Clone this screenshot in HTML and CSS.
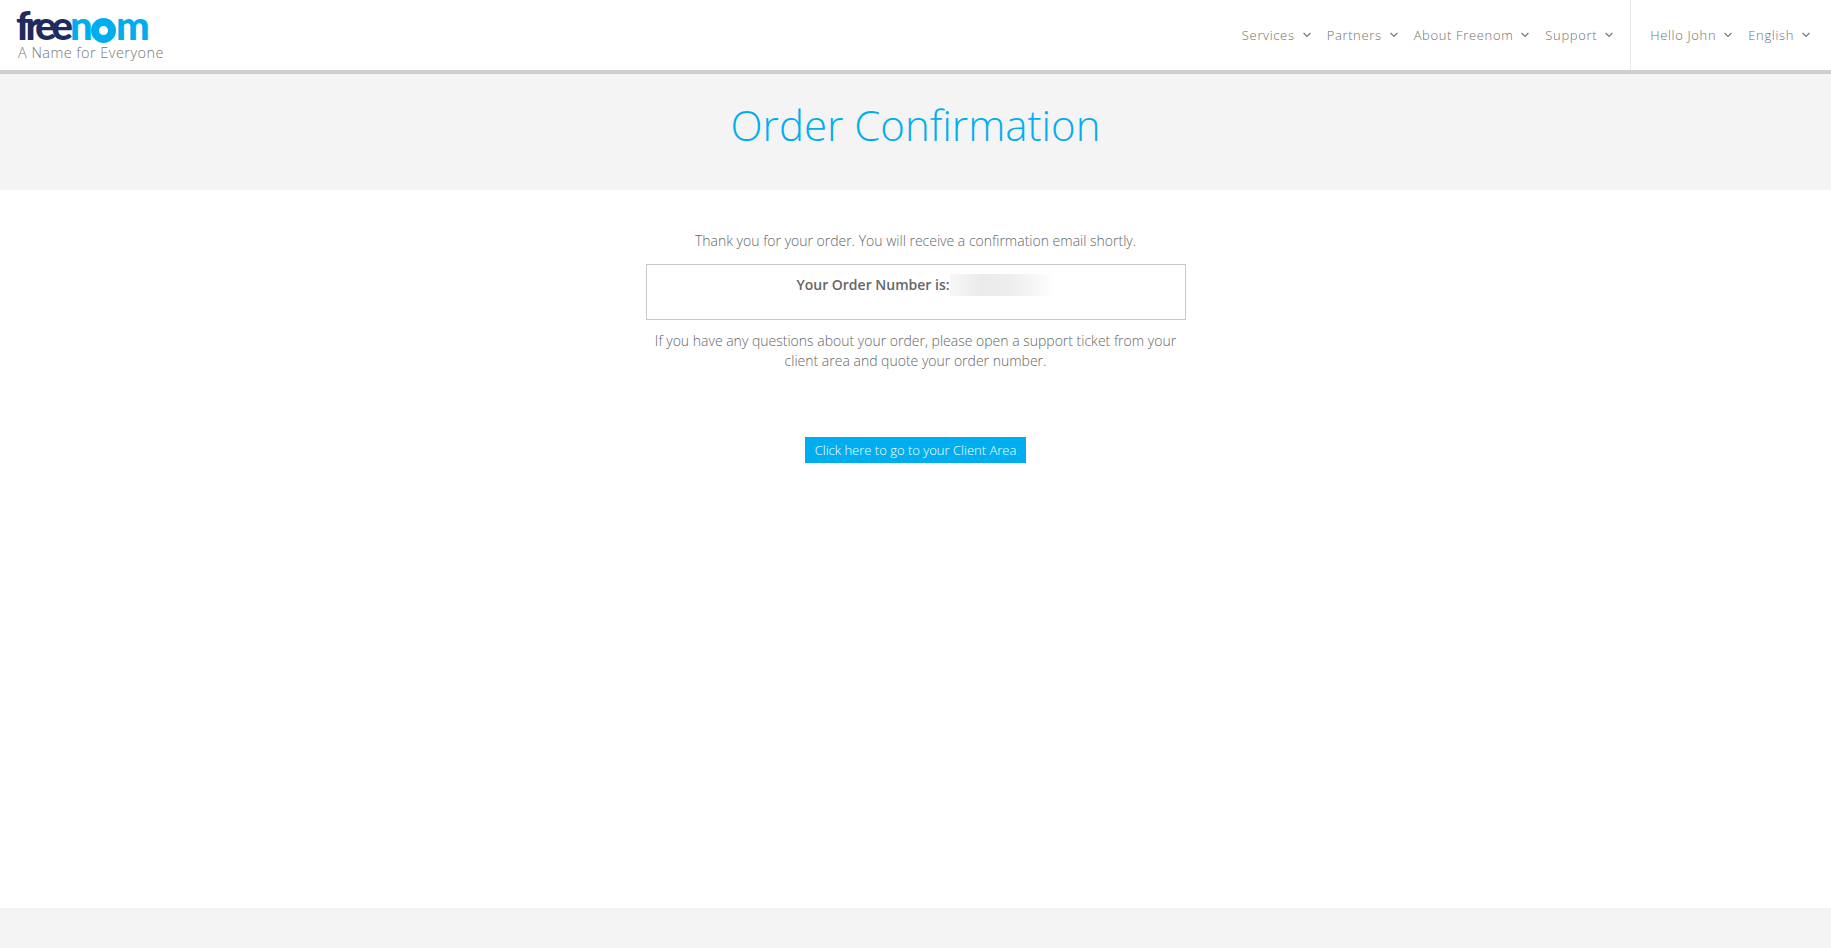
FILE: index.html
```html
<!DOCTYPE html>
<html lang="en">
<head>
<meta charset="utf-8">
<title>Order Confirmation</title>
<link rel="stylesheet" href="styles.css">
</head>
<body>
<header class="topbar">
  <a class="brand">
    <span class="logo"><span class="logo-dark">free</span><span class="logo-blue">n<span class="logo-o"></span>m</span></span>
    <span class="tagline">A Name for Everyone</span>
  </a>
  <nav class="nav">
    <ul class="menu">
      <li class="item">Services<svg class="chev" viewBox="0 0 8 6"><path d="M.6 1 4 4.4 7.4 1"/></svg></li>
      <li class="item">Partners<svg class="chev" viewBox="0 0 8 6"><path d="M.6 1 4 4.4 7.4 1"/></svg></li>
      <li class="item">About Freenom<svg class="chev" viewBox="0 0 8 6"><path d="M.6 1 4 4.4 7.4 1"/></svg></li>
      <li class="item">Support<svg class="chev" viewBox="0 0 8 6"><path d="M.6 1 4 4.4 7.4 1"/></svg></li>
    </ul>
    <ul class="menu menu-user">
      <li class="item">Hello John<svg class="chev" viewBox="0 0 8 6"><path d="M.6 1 4 4.4 7.4 1"/></svg></li>
      <li class="item">English<svg class="chev" viewBox="0 0 8 6"><path d="M.6 1 4 4.4 7.4 1"/></svg></li>
    </ul>
  </nav>
</header>
<section class="hero"><h1>Order Confirmation</h1></section>
<main class="content">
  <p class="thanks">Thank you for your order. You will receive a confirmation email shortly.</p>
  <div class="order-box"><strong>Your Order Number is:</strong><span class="redacted"></span></div>
  <p class="note">If you have any questions about your order, please open a support ticket from your client area and quote your order number.</p>
  <a class="button">Click here to go to your Client Area</a>
</main>
<footer class="footer"></footer>
</body>
</html>
```
FILE: styles.css
```css
* { box-sizing: border-box; }
html, body { margin: 0; height: 100%; }
body {
  display: flex;
  flex-direction: column;
  height: 948px;
  overflow: hidden;
  background: #fff;
  font-family: "Open Sans", sans-serif;
  color: #6e6e6e;
}
.topbar {
  flex: none;
  height: 74px;
  display: flex;
  justify-content: space-between;
  border-bottom: 4px solid #cfcfcf;
  background: #fff;
}
.brand {
  display: flex;
  flex-direction: column;
  padding: 9px 0 0 16px;
}
.logo {
  display: flex;
  font-family: "Lato", sans-serif;
  font-weight: 900;
  font-size: 40px;
  line-height: 32px;
  height: 35px;
  letter-spacing: -2.6px;
}
.logo-dark { color: #1f2a5f; letter-spacing: -5px; margin-right: 2px; }
.logo-blue { color: #00aeef; display: inline-flex; align-items: baseline; }
.logo-o {
  display: inline-block;
  width: 25px;
  height: 25px;
  margin: 0 0 1px 1px;
  border: 8.5px solid #00aeef;
  border-radius: 50%;
  align-self: flex-end;
}
.tagline {
  margin-left: 2px;
  font-size: 14.5px;
  font-weight: 300;
  line-height: 17px;
  letter-spacing: .45px;
  color: #777;
}
.nav { display: flex; height: 70px; }
.menu {
  display: flex;
  align-items: center;
  gap: 16px;
  list-style: none;
  margin: 0;
  padding: 0 17px 0 0;
}
.menu-user {
  border-left: 1px solid #e8e8e8;
  padding: 0 21px 0 19px;
}
.item {
  display: flex;
  align-items: center;
  font-size: 13px;
  font-weight: 300;
  letter-spacing: .65px;
  color: #6f6f6f;
  white-space: nowrap;
}
.chev {
  width: 8px;
  height: 6px;
  margin-left: 8px;
  fill: none;
  stroke: #777;
  stroke-width: 1.2;
}
.hero {
  flex: none;
  height: 116px;
  padding-bottom: 15px;
  background: #f4f4f4;
  display: flex;
  align-items: center;
  justify-content: center;
}
.hero h1 {
  margin: 0;
  font-size: 42px;
  font-weight: 300;
  line-height: 58px;
  color: #00aeef;
}
.content {
  flex: 1;
  width: 540px;
  margin: 0 auto;
  padding-top: 41px;
  display: flex;
  flex-direction: column;
  align-items: center;
  text-align: center;
  font-size: 14px;
  font-weight: 300;
  line-height: 20px;
  color: #666;
}
.content p { margin: 0; }
.order-box {
  width: 540px;
  height: 56px;
  margin: 13px 0 11px;
  border: 1px solid #c8c8c8;
  display: flex;
  justify-content: center;
  align-items: flex-start;
  padding-top: 10px;
}
.order-box strong { font-weight: 600; font-size: 14px; color: #666; }
.redacted {
  width: 104px;
  height: 22px;
  margin: -1px -19px 0 0;
  background: linear-gradient(90deg, #f7f7f7, #ebebeb 30%, #eeeeee 60%, #fff);
}
.note { width: 540px; }
.button {
  margin-top: 66px;
  width: 221px;
  height: 26px;
  background: #00aeef;
  color: #fff;
  font-size: 13px;
  line-height: 26px;
}
.footer { flex: none; height: 40px; background: #f4f4f4; }
```
